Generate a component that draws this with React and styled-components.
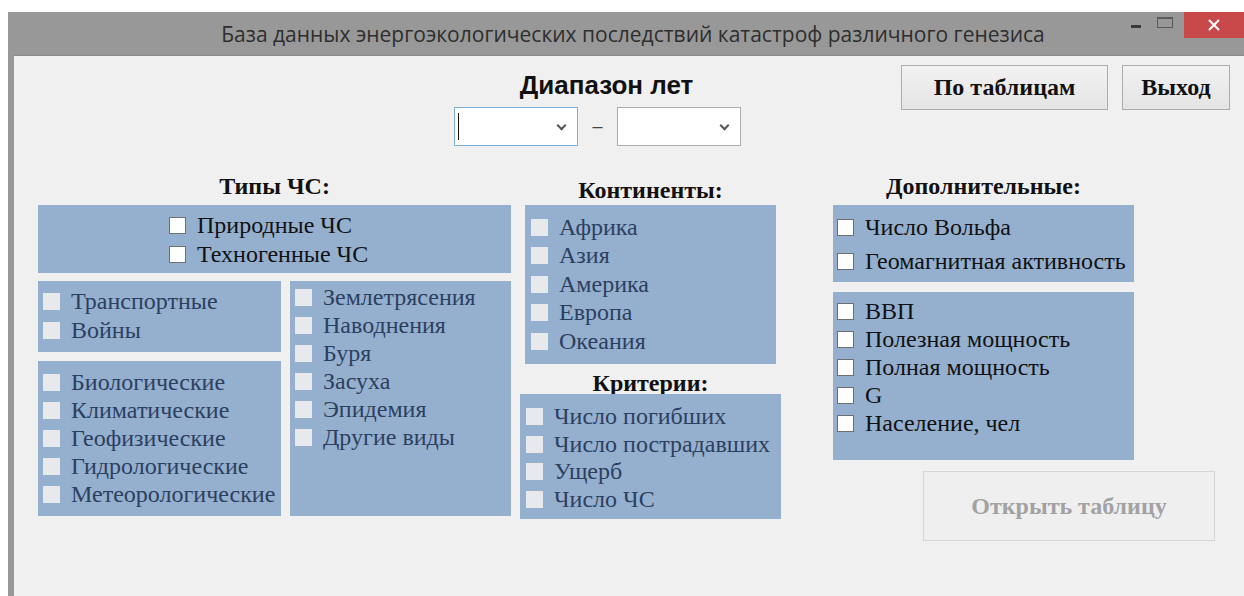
import React from "react";
import styled, { createGlobalStyle } from "styled-components";

const GlobalStyle = createGlobalStyle`
  html, body {
    margin: 0;
    padding: 0;
    background: #ffffff;
  }
  body {
    width: 1244px;
    height: 596px;
    overflow: hidden;
  }
`;

const SERIF = `"Liberation Serif", "Times New Roman", serif`;

const topKinds = ["Природные ЧС", "Техногенные ЧС"];
const manMade = ["Транспортные", "Войны"];
const natural = [
  "Биологические",
  "Климатические",
  "Геофизические",
  "Гидрологические",
  "Метеорологические",
];
const subtypes = [
  "Землетрясения",
  "Наводнения",
  "Буря",
  "Засуха",
  "Эпидемия",
  "Другие виды",
];
const continents = ["Африка", "Азия", "Америка", "Европа", "Океания"];
const criteria = ["Число погибших", "Число пострадавших", "Ущерб", "Число ЧС"];
const extraTop = ["Число Вольфа", "Геомагнитная активность"];
const extraBottom = [
  "ВВП",
  "Полезная мощность",
  "Полная мощность",
  "G",
  "Население, чел",
];

const Option = ({ label, enabled, row }) => (
  <OptionRow $row={row} $enabled={enabled}>
    <Box $enabled={enabled} />
    <span>{label}</span>
  </OptionRow>
);

const OptionList = ({ items, enabled, row }) =>
  items.map((label) => (
    <Option key={label} label={label} enabled={enabled} row={row} />
  ));

const App = () => {
  return (
    <>
      <GlobalStyle />
      <Window>
        <TitleBar>
          <Caption>
            База данных энергоэкологических последствий катастроф различного
            генезиса
          </Caption>
          <WinControls>
            <MinButton>
              <span />
            </MinButton>
            <MaxButton>
              <span />
            </MaxButton>
            <CloseButton>
              <svg width="14" height="12" viewBox="0 0 14 12">
                <path
                  d="M2 1 L12 11 M12 1 L2 11"
                  stroke="#ffffff"
                  strokeWidth="2"
                  fill="none"
                />
              </svg>
            </CloseButton>
          </WinControls>
        </TitleBar>

        <Content>
          <TopRow>
            <RangeBlock>
              <RangeTitle>Диапазон лет</RangeTitle>
              <RangeInputs>
                <Combo $focused>
                  <Caret />
                  <Chevron />
                </Combo>
                <Dash>–</Dash>
                <Combo>
                  <Chevron />
                </Combo>
              </RangeInputs>
            </RangeBlock>
            <TopButtons>
              <FormButton $w={207}>По таблицам</FormButton>
              <FormButton $w={108}>Выход</FormButton>
            </TopButtons>
          </TopRow>

          <Columns>
            <TypesColumn>
              <GroupTitle>Типы ЧС:</GroupTitle>
              <Panel $h={68} $pt={6} $pl={131}>
                <OptionList items={topKinds} enabled row={29} />
              </Panel>
              <SubGrid>
                <SubColumn>
                  <Panel $h={71} $pt={6}>
                    <OptionList items={manMade} row={29} />
                  </Panel>
                  <Panel $h={155} $pt={7}>
                    <OptionList items={natural} row={28} />
                  </Panel>
                </SubColumn>
                <Panel $h={235} $pt={2}>
                  <OptionList items={subtypes} row={28} />
                </Panel>
              </SubGrid>
            </TypesColumn>

            <MiddleColumn>
              <GroupTitle $top={4} $bottom={5}>
                Континенты:
              </GroupTitle>
              <Panel $h={159} $pt={8} $pl={6} $inset={5}>
                <OptionList items={continents} row={28.5} />
              </Panel>
              <GroupTitle $top={9} $bottom={1}>
                Критерии:
              </GroupTitle>
              <Panel $h={125} $pt={9} $pl={6}>
                <OptionList items={criteria} row={27.5} />
              </Panel>
            </MiddleColumn>

            <ExtraColumn>
              <ExtraPanels>
                <GroupTitle>Дополнительные:</GroupTitle>
                <Panel $h={77} $pt={5} $pl={4}>
                  <OptionList items={extraTop} enabled row={34} />
                </Panel>
                <Panel $h={168} $pt={5} $pl={4} $gap={10}>
                  <OptionList items={extraBottom} enabled row={28} />
                </Panel>
              </ExtraPanels>
              <OpenButton disabled>Открыть таблицу</OpenButton>
            </ExtraColumn>
          </Columns>
        </Content>
      </Window>
    </>
  );
};

const Window = styled.div`
  margin: 12px 0 0 8px;
  width: 1236px;
  height: 584px;
  background: #989898;
  display: flex;
  flex-direction: column;
`;

const TitleBar = styled.div`
  height: 43px;
  flex: none;
  display: flex;
  align-items: flex-start;
`;

const Caption = styled.div`
  flex: 1;
  padding: 8px 0 0 128px;
  text-align: center;
  font-family: "Open Sans", "Noto Sans", sans-serif;
  font-size: 21px;
  line-height: 28px;
  color: #2e2e2e;
  white-space: nowrap;
`;

const WinControls = styled.div`
  display: flex;
  align-items: flex-start;
`;

const MinButton = styled.div`
  width: 27px;
  height: 26px;
  display: flex;
  padding-left: 1px;
  box-sizing: border-box;

  span {
    margin-top: 13px;
    width: 10px;
    height: 3px;
    background: #3a3a3a;
  }
`;

const MaxButton = styled.div`
  width: 27px;
  height: 26px;
  display: flex;

  span {
    margin-top: 5px;
    width: 16px;
    height: 11px;
    box-sizing: border-box;
    border: 1px solid #5a5a5a;
    border-top-width: 2px;
  }
`;

const CloseButton = styled.div`
  width: 60px;
  height: 26px;
  background: #c9494b;
  display: flex;
  align-items: center;
  justify-content: center;
`;

const Content = styled.div`
  flex: 1;
  margin-left: 6px;
  background: #f0f0f0;
  border-top: 1px solid #8a8a8a;
  display: flex;
  flex-direction: column;
`;

const TopRow = styled.div`
  display: flex;
  align-items: flex-start;
  padding: 9px 0 0 439px;
`;

const RangeBlock = styled.div`
  width: 289px;
  margin-top: 8px;
  display: flex;
  flex-direction: column;
  align-items: center;
`;

const RangeTitle = styled.div`
  padding-left: 18px;
  font-family: "Liberation Sans", Arial, sans-serif;
  font-weight: bold;
  font-size: 26px;
  line-height: 24px;
  color: #111;
`;

const RangeInputs = styled.div`
  margin-top: 10px;
  display: flex;
  align-items: center;
  gap: 14px;
`;

const Combo = styled.div`
  position: relative;
  width: 124px;
  height: 39px;
  box-sizing: border-box;
  background: #ffffff;
  border: 1px solid ${({ $focused }) => ($focused ? "#7ab0dc" : "#acacac")};
`;

const Caret = styled.span`
  position: absolute;
  left: 3px;
  top: 5px;
  width: 1px;
  height: 27px;
  background: #111;
`;

const Chevron = styled.span`
  position: absolute;
  right: 12px;
  top: 14px;
  width: 5px;
  height: 5px;
  border-right: 2px solid #555;
  border-bottom: 2px solid #555;
  transform: rotate(45deg);
`;

const Dash = styled.span`
  font-family: "Liberation Sans", Arial, sans-serif;
  font-size: 18px;
  color: #444;
`;

const TopButtons = styled.div`
  margin-left: 159px;
  display: flex;
  gap: 14px;
`;

const FormButton = styled.button`
  width: ${({ $w }) => $w}px;
  height: 45px;
  padding: 0;
  border: 1px solid #acacac;
  background: linear-gradient(#f2f2f2, #e4e4e4);
  font-family: ${SERIF};
  font-weight: bold;
  font-size: 24px;
  color: #111;
`;

const Columns = styled.div`
  display: flex;
  align-items: flex-start;
  margin-top: 30px;
  padding-left: 24px;
`;

const GroupTitle = styled.div`
  height: 20px;
  margin: ${({ $top = 0, $bottom = 9 }) => `${$top}px 0 ${$bottom}px`};
  text-align: center;
  font-family: ${SERIF};
  font-weight: bold;
  font-size: 24px;
  line-height: 20px;
  color: #111;
  white-space: nowrap;
`;

const TypesColumn = styled.div`
  width: 473px;
  display: flex;
  flex-direction: column;
`;

const SubGrid = styled.div`
  margin-top: 8px;
  display: grid;
  grid-template-columns: 243px 221px;
  column-gap: 9px;
`;

const SubColumn = styled.div`
  display: flex;
  flex-direction: column;
  gap: 9px;
`;

const MiddleColumn = styled.div`
  width: 261px;
  margin-left: 9px;
  display: flex;
  flex-direction: column;
`;

const ExtraColumn = styled.div`
  width: 382px;
  margin-left: 52px;
  display: flex;
  flex-direction: column;
`;

const ExtraPanels = styled.div`
  width: 301px;
  display: flex;
  flex-direction: column;

  & > div + div + div {
    margin-top: 10px;
  }
`;

const Panel = styled.div`
  height: ${({ $h }) => $h}px;
  margin: 0 ${({ $inset = 0 }) => $inset}px;
  box-sizing: border-box;
  padding: ${({ $pt = 0, $pl = 5 }) => `${$pt}px 0 0 ${$pl}px`};
  background: #95b0cf;
  display: flex;
  flex-direction: column;
`;

const OptionRow = styled.div`
  height: ${({ $row }) => $row}px;
  display: flex;
  align-items: center;
  gap: 11px;
  font-family: ${SERIF};
  font-size: 24px;
  white-space: nowrap;
  color: ${({ $enabled }) => ($enabled ? "#111111" : "#2d3f5e")};
`;

const Box = styled.span`
  flex: none;
  width: 17px;
  height: 17px;
  box-sizing: border-box;
  background: ${({ $enabled }) => ($enabled ? "#ffffff" : "#e8e9ec")};
  border: 1px solid ${({ $enabled }) => ($enabled ? "#6f6f6f" : "#e8e9ec")};
`;

const OpenButton = styled.button`
  margin: 11px 0 0 90px;
  width: 292px;
  height: 70px;
  padding: 0;
  border: 1px solid #d6d6d6;
  background: #efefef;
  font-family: ${SERIF};
  font-weight: bold;
  font-size: 24px;
  color: #a2a2a2;
`;

export default App;
